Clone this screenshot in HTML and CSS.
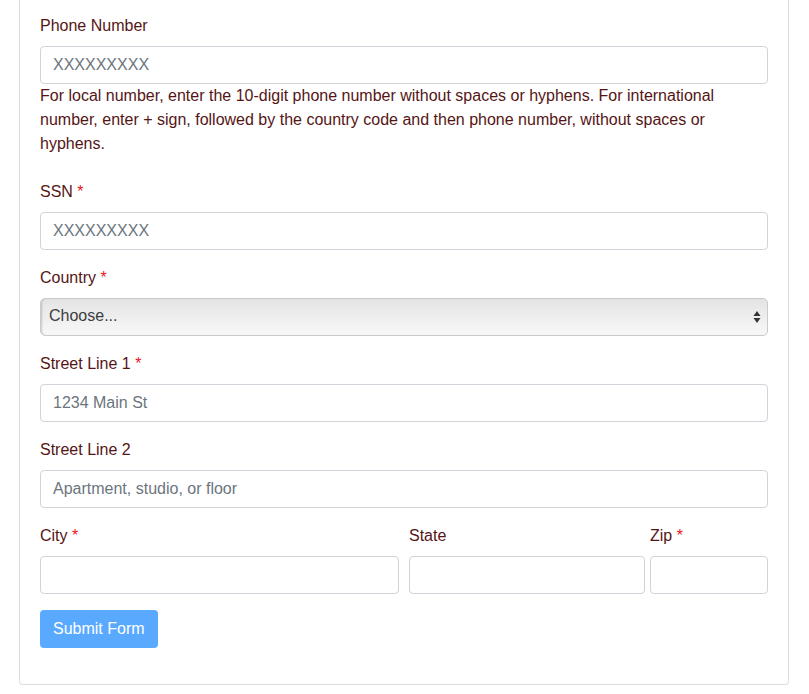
FILE: index.html
```html
<!DOCTYPE html>
<html lang="en">
<head>
  <meta charset="UTF-8">
  <title>Applicant Form</title>
  <link rel="stylesheet" href="styles.css">
</head>
<body>
  <div class="card">
    <form class="applicant-form">
      <div class="form-group">
        <label class="field-label" for="phone">Phone Number</label>
        <input class="form-control" type="text" id="phone" placeholder="XXXXXXXXX">
        <p class="help">For local number, enter the 10-digit phone number without spaces or hyphens. For international number, enter + sign, followed by the country code and then phone number, without spaces or hyphens.</p>
      </div>

      <div class="form-group">
        <label class="field-label" for="ssn">SSN <span class="req">*</span></label>
        <input class="form-control" type="text" id="ssn" placeholder="XXXXXXXXX">
      </div>

      <div class="form-group">
        <label class="field-label" for="country">Country <span class="req">*</span></label>
        <div class="select-wrap">
          <select class="form-select" id="country">
            <option>Choose...</option>
          </select>
          <svg class="select-arrows" width="8" height="14" viewBox="0 0 8 14">
            <path d="M4 1 L7.5 6 L0.5 6 Z" fill="#333"/>
            <path d="M4 13 L7.5 8 L0.5 8 Z" fill="#333"/>
          </svg>
        </div>
      </div>

      <div class="form-group">
        <label class="field-label" for="street1">Street Line 1 <span class="req">*</span></label>
        <input class="form-control" type="text" id="street1" placeholder="1234 Main St">
      </div>

      <div class="form-group">
        <label class="field-label" for="street2">Street Line 2</label>
        <input class="form-control" type="text" id="street2" placeholder="Apartment, studio, or floor">
      </div>

      <div class="form-row">
        <div class="form-group col-city">
          <label class="field-label" for="city">City <span class="req">*</span></label>
          <input class="form-control" type="text" id="city">
        </div>
        <div class="form-group col-state">
          <label class="field-label" for="state">State</label>
          <input class="form-control" type="text" id="state">
        </div>
        <div class="form-group col-zip">
          <label class="field-label" for="zip">Zip <span class="req">*</span></label>
          <input class="form-control" type="text" id="zip">
        </div>
      </div>

      <button class="submit-btn" type="submit" disabled>Submit Form</button>
    </form>
  </div>
</body>
</html>
```

FILE: styles.css
```css
body {
  margin: 0;
  background-color: #fff;
  font-family: "Liberation Sans", Arial, sans-serif;
  font-size: 16px;
  line-height: 1.5;
}

.card {
  margin-left: 19px;
  width: 728px;
  padding: 14px 20px 36px;
  border: 1px solid #dcdcdc;
  border-top: none;
  border-radius: 0 0 4px 4px;
}

.form-group {
  margin-bottom: 16px;
}

.field-label {
  display: block;
  margin-bottom: 8px;
  color: #561515;
}

.req {
  color: #e8141b;
}

.form-control {
  display: block;
  box-sizing: border-box;
  width: 100%;
  height: 38px;
  padding: 6px 12px;
  font-family: inherit;
  font-size: 16px;
  color: #495057;
  background-color: #fff;
  border: 1px solid #ced4da;
  border-radius: 4px;
}

.form-control::placeholder {
  color: #6c757d;
}

.help {
  margin: 0 0 24px;
  color: #561515;
}

/* mac-style native select */
.select-wrap {
  position: relative;
}

.form-select {
  display: block;
  box-sizing: border-box;
  width: 100%;
  height: 38px;
  padding: 0 30px 3px 8px;
  font-family: inherit;
  font-size: 16px;
  color: #3a3d41;
  -webkit-appearance: none;
  appearance: none;
  border: 1px solid #c8cbcf;
  border-radius: 5px;
  background: linear-gradient(#e4e4e4, #f0f0f0 60%, #f8f8f8);
  box-shadow: inset 2px 0 2px -1px rgba(0,0,0,0.18);
}

.select-arrows {
  position: absolute;
  right: 7px;
  top: 12px;
}

.form-row {
  display: flex;
}

.col-city {
  width: 359px;
  margin-right: 10px;
}

.col-state {
  width: 236px;
  margin-right: 5px;
}

.col-zip {
  width: 118px;
}

.submit-btn {
  display: block;
  height: 38px;
  padding: 0 13px;
  font-family: inherit;
  font-size: 16px;
  color: #fff;
  background-color: #59a9ff;
  border: none;
  border-radius: 4px;
}
```
